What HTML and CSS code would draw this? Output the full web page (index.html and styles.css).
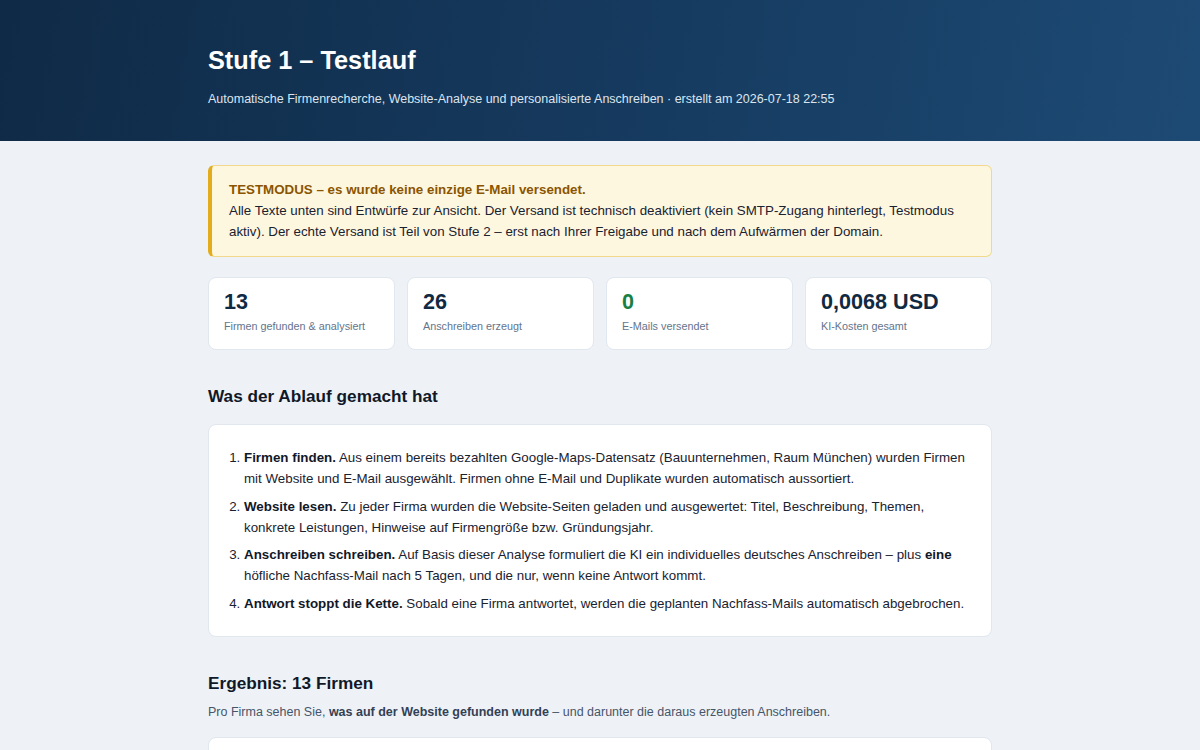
FILE: index.html
```html
<!DOCTYPE html>
<html lang="de">
<head>
<meta charset="utf-8">
<title>Stufe 1 – Testlauf</title>
<link rel="stylesheet" href="styles.css">
</head>
<body>
<header class="hero">
  <div class="wrap">
    <h1 class="hero-title">Stufe 1 – Testlauf</h1>
    <p class="hero-sub">Automatische Firmenrecherche, Website-Analyse und personalisierte Anschreiben · erstellt am 2026-07-18 22:55</p>
  </div>
</header>
<main class="wrap main">
  <div class="alert">
    <div class="alert-title">TESTMODUS – es wurde keine einzige E-Mail versendet.</div>
    <div class="alert-text">Alle Texte unten sind Entwürfe zur Ansicht. Der Versand ist technisch deaktiviert (kein SMTP-Zugang hinterlegt, Testmodus aktiv). Der echte Versand ist Teil von Stufe 2 – erst nach Ihrer Freigabe und nach dem Aufwärmen der Domain.</div>
  </div>

  <div class="stats">
    <div class="stat"><div class="stat-num">13</div><div class="stat-label">Firmen gefunden &amp; analysiert</div></div>
    <div class="stat"><div class="stat-num">26</div><div class="stat-label">Anschreiben erzeugt</div></div>
    <div class="stat"><div class="stat-num green">0</div><div class="stat-label">E-Mails versendet</div></div>
    <div class="stat"><div class="stat-num">0,0068 USD</div><div class="stat-label">KI-Kosten gesamt</div></div>
  </div>

  <h2 class="section-title">Was der Ablauf gemacht hat</h2>
  <div class="card">
    <ol class="steps">
      <li><b>Firmen finden.</b> Aus einem bereits bezahlten Google-Maps-Datensatz (Bauunternehmen, Raum München) wurden Firmen mit Website und E-Mail ausgewählt. Firmen ohne E-Mail und Duplikate wurden automatisch aussortiert.</li>
      <li><b>Website lesen.</b> Zu jeder Firma wurden die Website-Seiten geladen und ausgewertet: Titel, Beschreibung, Themen, konkrete Leistungen, Hinweise auf Firmengröße bzw. Gründungsjahr.</li>
      <li><b>Anschreiben schreiben.</b> Auf Basis dieser Analyse formuliert die KI ein individuelles deutsches Anschreiben – plus <b>eine</b> höfliche Nachfass-Mail nach 5 Tagen, und die nur, wenn keine Antwort kommt.</li>
      <li><b>Antwort stoppt die Kette.</b> Sobald eine Firma antwortet, werden die geplanten Nachfass-Mails automatisch abgebrochen.</li>
    </ol>
  </div>

  <h2 class="section-title result-title">Ergebnis: 13 Firmen</h2>
  <p class="lead">Pro Firma sehen Sie, <b>was auf der Website gefunden wurde</b> – und darunter die daraus erzeugten Anschreiben.</p>
  <div class="card company"></div>
</main>
</body>
</html>
```

FILE: styles.css
```css
* { box-sizing: border-box; }
html, body { margin: 0; padding: 0; }
body {
  background: #eef2f7;
  font-family: "Liberation Sans", Arial, sans-serif;
  color: #1a2233;
  font-size: 13.35px;
}
.wrap { width: 784px; margin: 0 auto; }
.hero {
  background: linear-gradient(100deg, #0f2a46 0%, #163b60 55%, #1d4a74 100%);
  color: #fff;
  height: 141px;
  padding-top: 45px;
}
.hero-title {
  margin: 0;
  font-size: 25.3px;
  font-weight: bold;
  line-height: 30px;
}
.hero-sub {
  margin: 16px 0 0;
  font-size: 12.5px;
  line-height: 16px;
  color: #dce5ef;
}
.main { padding-top: 24px; }
.alert {
  background: #fef7e0;
  border: 1px solid #f1d88c;
  border-left: 4px solid #e3ac1c;
  border-radius: 6px;
  padding: 13px 18px 14px 17px;
  line-height: 21px;
  font-size: 13.35px;
  color: #1a2230;
}
.alert-title { font-weight: bold; color: #8a5500; }
.stats {
  display: grid;
  grid-template-columns: repeat(4, 1fr);
  gap: 12px;
  margin-top: 20px;
}
.stat {
  background: #fff;
  border: 1px solid #e1e7ef;
  border-radius: 8px;
  height: 73px;
  padding: 12px 15px;
}
.stat-num {
  font-size: 21.6px;
  font-weight: bold;
  color: #102a43;
  line-height: 24px;
}
.stat-num.green { color: #1a7f43; }
.stat-label {
  margin-top: 5px;
  font-size: 10.8px;
  color: #64748b;
  line-height: 14px;
}
.section-title {
  font-size: 17.2px;
  font-weight: bold;
  color: #111827;
  margin: 35px 0 17px;
  line-height: 22px;
}
.card {
  background: #fff;
  border: 1px solid #e1e7ef;
  border-radius: 8px;
}
.steps {
  margin: 0;
  padding: 22px 24px 22px 35px;
  line-height: 21px;
  font-size: 13.35px;
  color: #1a2230;
}
.steps li { margin-bottom: 6.7px; padding-left: 0; }
.steps li:last-child { margin-bottom: 0; }
.steps b { color: #111827; }
.result-title { margin: 35px 0 10px; }
.lead {
  margin: 0 0 17px;
  font-size: 12.5px;
  color: #475569;
  line-height: 16px;
}
.lead b { color: #334155; }
.company { height: 120px; }
```
